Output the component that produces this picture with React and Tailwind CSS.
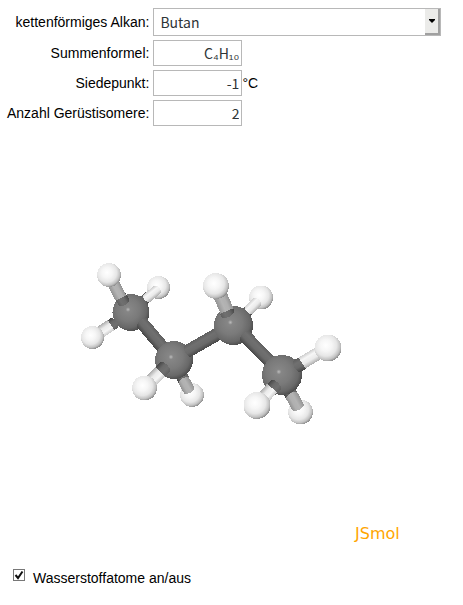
import { useState } from "react";

const bonds = {
  stub: "url(#carbonBond)",
  white: "url(#whiteBond)",
  silver: "url(#silverBond)",
};

// Painted from back to front: b = bond segment, C = carbon, H = hydrogen
const scene = [
  ["H", 158.5, 287.5, 11.5],
  ["b", 138, 305, 149, 296, 10, "stub"],
  ["b", 147, 298, 157, 290, 10, "white"],
  ["H", 192, 395, 12],
  ["b", 178, 368, 184, 381, 12, "stub"],
  ["b", 184, 381, 189, 390, 12, "silver"],
  ["H", 261, 297.5, 12],
  ["b", 240, 319, 250, 309, 11, "stub"],
  ["b", 249, 310, 257, 302, 11, "white"],
  ["H", 300.5, 412, 12.5],
  ["b", 286, 385, 292, 396, 13, "stub"],
  ["b", 292, 396, 298, 407, 13, "silver"],
  ["C", 131, 312.5, 18.5],
  ["b", 142, 323, 170, 356, 13, "stub"],
  ["C", 174, 360, 19],
  ["b", 188, 351, 228, 328, 13, "stub"],
  ["C", 233.5, 325.5, 19.5],
  ["b", 245, 336, 276, 368, 13, "stub"],
  ["C", 282, 375, 20],
  ["b", 124, 302, 120, 296, 12, "stub"],
  ["b", 121, 298, 111, 279, 12, "silver", true],
  ["H", 109, 275, 12],
  ["b", 114, 323, 110, 326, 12, "stub"],
  ["b", 111, 325, 96, 335, 12, "white", true],
  ["H", 92.5, 337.5, 11.5],
  ["b", 165, 367, 159, 373, 13, "stub"],
  ["b", 160, 372, 148, 384, 13, "white", true],
  ["H", 144.5, 388, 12.5],
  ["b", 228, 314, 226, 310, 14, "stub"],
  ["b", 227, 311, 218, 290, 14, "silver", true],
  ["H", 216, 286, 13],
  ["b", 297, 366, 303, 363, 13, "stub"],
  ["b", 302, 363, 322, 351, 13, "white", true],
  ["H", 328, 348, 13.5],
  ["b", 276, 385, 271, 390, 13, "stub"],
  ["b", 272, 388, 260, 402, 13, "white", true],
  ["H", 257, 405.5, 13.5],
];

function Bond({ x1, y1, x2, y2, w, tone, flat }) {
  const length = Math.hypot(x2 - x1, y2 - y1);
  const angle = (Math.atan2(y2 - y1, x2 - x1) * 180) / Math.PI;
  const cap = flat ? 0 : 3;
  return (
    <rect
      x={-cap}
      y={-w / 2}
      width={length + cap * 2}
      height={w}
      rx={cap}
      ry={flat ? 0 : w / 2}
      fill={bonds[tone]}
      transform={`translate(${x1} ${y1}) rotate(${angle})`}
    />
  );
}

function Molecule({ hydrogens }) {
  const shown = hydrogens
    ? scene
    : scene.filter((s) => s[0] === "C" || (s[0] === "b" && Math.hypot(s[3] - s[1], s[4] - s[2]) > 40));
  return (
    <svg viewBox="8 134 400 410" className="block h-auto w-[400px] max-w-full" role="img" aria-label="Butan">
      <defs>
        <radialGradient id="carbon" cx="0.42" cy="0.42" r="0.62">
          <stop offset="0" stopColor="#bcbcbc" />
          <stop offset="0.1" stopColor="#868686" />
          <stop offset="0.5" stopColor="#7a7a7a" />
          <stop offset="0.8" stopColor="#686868" />
          <stop offset="1" stopColor="#484848" />
        </radialGradient>
        <radialGradient id="hydrogen" cx="0.42" cy="0.4" r="0.62">
          <stop offset="0" stopColor="#ffffff" />
          <stop offset="0.35" stopColor="#f6f6f6" />
          <stop offset="0.65" stopColor="#e6e6e6" />
          <stop offset="0.86" stopColor="#c2c2c2" />
          <stop offset="1" stopColor="#8c8c8c" />
        </radialGradient>
        <linearGradient id="carbonBond" x1="0" y1="0" x2="0" y2="1">
          <stop offset="0" stopColor="#606060" />
          <stop offset="0.3" stopColor="#707070" />
          <stop offset="0.65" stopColor="#6a6a6a" />
          <stop offset="1" stopColor="#484848" />
        </linearGradient>
        <linearGradient id="whiteBond" x1="0" y1="0" x2="0" y2="1">
          <stop offset="0" stopColor="#cccccc" />
          <stop offset="0.3" stopColor="#f6f6f6" />
          <stop offset="0.65" stopColor="#eaeaea" />
          <stop offset="1" stopColor="#adadad" />
        </linearGradient>
        <linearGradient id="silverBond" x1="0" y1="0" x2="0" y2="1">
          <stop offset="0" stopColor="#949494" />
          <stop offset="0.4" stopColor="#b4b4b4" />
          <stop offset="0.7" stopColor="#b0b0b0" />
          <stop offset="1" stopColor="#929292" />
        </linearGradient>
      </defs>
      <g shapeRendering="crispEdges">
        {shown.map((s, i) =>
          s[0] === "b" ? (
            <Bond key={i} x1={s[1]} y1={s[2]} x2={s[3]} y2={s[4]} w={s[5]} tone={s[6]} flat={s[7]} />
          ) : (
            <circle key={i} cx={s[1]} cy={s[2]} r={s[3]} fill={s[0] === "C" ? "url(#carbon)" : "url(#hydrogen)"} />
          ),
        )}
      </g>
      <text x="355" y="539" className="fill-[#ffa500] font-['DejaVu_Sans',sans-serif] text-[16px]">
        JSmol
      </text>
    </svg>
  );
}

const fieldClass =
  "border border-[#b8b8b8] bg-white font-['Noto_Sans_CJK_SC',sans-serif] text-[14px] text-[#2e3436] outline-none";

function ResultRow({ id, label, value, unit }) {
  return (
    <>
      <label htmlFor={id} className="text-right">
        {label}
      </label>
      <div className="flex items-center">
        <input id={id} readOnly value={value} className={`${fieldClass} h-[26px] w-[89px] px-[2px] text-right`} />
        {unit && <span>{unit}</span>}
      </div>
    </>
  );
}

export default function App() {
  const [hydrogens, setHydrogens] = useState(true);
  return (
    <main className="bg-white pt-2 font-['Liberation_Sans',Arial,sans-serif] text-[14px] leading-5 text-black">
      <form className="mr-[22px] ml-[7px] grid grid-cols-[auto_1fr] items-center gap-1">
        <label htmlFor="alkan" className="text-right">
          kettenförmiges Alkan:
        </label>
        <div className="relative">
          <select id="alkan" className={`${fieldClass} block h-7 w-full appearance-none pr-5 pl-1.5`}>
            <option>Butan</option>
          </select>
          <span className="pointer-events-none absolute inset-y-px right-px flex w-[15px] items-center justify-center border-r-2 border-b-2 border-[#a0a0a0] bg-[#ebebe9]">
            <svg width="6" height="4" viewBox="0 0 6 4" aria-hidden="true">
              <path d="M0 0h6v1L3 4 0 1z" fill="#000" />
            </svg>
          </span>
        </div>
        <ResultRow id="formel" label="Summenformel:" value="C₄H₁₀" />
        <ResultRow id="siedepunkt" label="Siedepunkt:" value="-1" unit="°C" />
        <ResultRow id="isomere" label="Anzahl Gerüstisomere:" value="2" />
      </form>
      <div className="mt-2 ml-2">
        <Molecule hydrogens={hydrogens} />
      </div>
      <label className="mt-6 ml-[13px] flex w-fit items-center gap-2">
        <span className="relative mb-1.5 block size-3">
          <input
            type="checkbox"
            checked={hydrogens}
            onChange={(e) => setHydrogens(e.target.checked)}
            className="peer block size-3 appearance-none border border-[#777777] bg-white"
          />
          <svg viewBox="0 0 12 12" aria-hidden="true" className="pointer-events-none absolute inset-0 hidden size-3 peer-checked:block">
            <path d="M2.5 6 5 9 9.5 2.5" fill="none" stroke="#111" strokeWidth="2" />
          </svg>
        </span>
        Wasserstoffatome an/aus
      </label>
    </main>
  );
}
